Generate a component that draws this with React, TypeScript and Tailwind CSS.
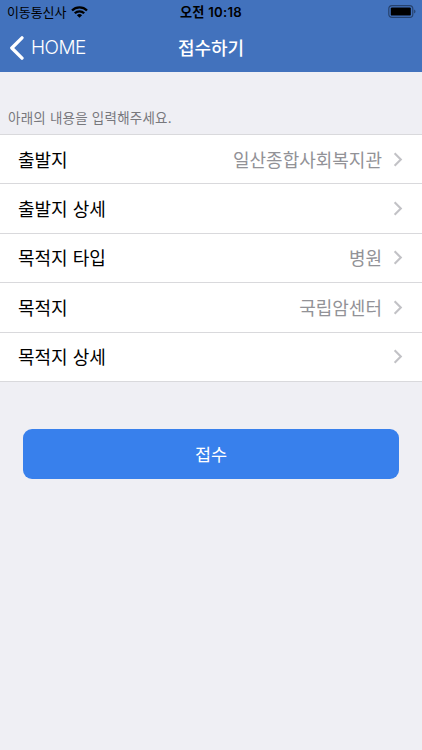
const FONT = "font-['Inter','Noto_Sans_CJK_KR',sans-serif]";

interface RowProps {
  label: string;
  value?: string;
}

const rows: RowProps[] = [
  { label: "출발지", value: "일산종합사회복지관" },
  { label: "출발지 상세" },
  { label: "목적지 타입", value: "병원" },
  { label: "목적지", value: "국립암센터" },
  { label: "목적지 상세" },
];

function WifiIcon() {
  return (
    <svg width="17" height="12" viewBox="0 0 17 12" className="ml-[5px]">
      <g fill="none" stroke="#000" strokeWidth="2.3">
        <path d="M1 4.5a10.7 10.7 0 0 1 15 0" />
        <path d="M3.8 7.3a6.7 6.7 0 0 1 9.4 0" />
      </g>
      <path d="M8.5 11.8L5.9 9.2a3.7 3.7 0 0 1 5.2 0z" />
    </svg>
  );
}

function BatteryIcon() {
  return (
    <svg width="28" height="13" viewBox="0 0 28 13">
      <rect x="0.8" y="0.6" width="24" height="11.8" rx="3.2" fill="none" stroke="#000" strokeOpacity="0.42" strokeWidth="1.2" />
      <rect x="2.8" y="2.4" width="20" height="8.2" rx="1.2" />
      <path d="M26.2 4.4v4.2c1.7-.7 1.7-3.5 0-4.2z" fillOpacity="0.45" />
    </svg>
  );
}

function StatusBar() {
  return (
    <div className="grid h-[22px] grid-cols-[1fr_auto_1fr] items-center px-[6px] pt-px leading-none text-black">
      <div className="flex items-center whitespace-nowrap pl-[1px]">
        <span className="pt-px text-[13px] tracking-[-0.1px]">이동통신사</span>
        <WifiIcon />
      </div>
      <div className="pt-[3px] text-[13.2px] font-semibold tracking-[0.25px]">오전 10:18</div>
      <div className="flex justify-end">
        <BatteryIcon />
      </div>
    </div>
  );
}

function NavBar() {
  return (
    <div className="grid h-[50px] grid-cols-[1fr_auto_1fr] items-center px-[9px] pt-px text-white">
      <div className="flex items-center gap-[7px] text-[19px] font-light tracking-[-0.5px]">
        <svg width="15" height="24" viewBox="0 0 15 24" fill="none" stroke="currentColor" strokeWidth="3.3" strokeLinecap="round" strokeLinejoin="round">
          <path d="M13 1.8L2.8 12 13 22.2" />
        </svg>
        <span className="pt-[2px]">HOME</span>
      </div>
      <div className="pt-px text-[18px] font-medium">접수하기</div>
    </div>
  );
}

function Row({ label, value }: RowProps) {
  return (
    <li className="flex h-[49.4px] items-center border-b border-[#d9d9dc] pl-[18px] pr-[19px] text-[18px]">
      <span className="pt-[2px] text-black">{label}</span>
      <span className="ml-auto pt-[2px] text-[#929297]">{value}</span>
      <svg width="10" height="15" viewBox="0 0 10 15" fill="none" stroke="#c2c2c6" strokeWidth="2.1" className="ml-[11px]">
        <path d="M1.6 1.3l6.2 6.2-6.2 6.2" />
      </svg>
    </li>
  );
}

export default function App() {
  return (
    <div className={`h-[750px] w-[422px] overflow-hidden bg-[#efeff4] ${FONT}`}>
      <header className="h-[72px] bg-[#4272bd]">
        <StatusBar />
        <NavBar />
      </header>
      <p className="mt-[36px] h-[26px] pl-[8px] text-[13.5px] leading-[20px] tracking-[0.22px] text-[#78787d]">
        아래의 내용을 입력해주세요.
      </p>
      <ul className="border-t border-[#d9d9dc] bg-white">
        {rows.map((row) => (
          <Row key={row.label} {...row} />
        ))}
      </ul>
      <button className="mx-[23px] mt-[47px] block h-[50px] w-[376px] rounded-[9px] bg-[#3880ec] pt-[3px] text-[17.5px] text-white">
        접수
      </button>
    </div>
  );
}
